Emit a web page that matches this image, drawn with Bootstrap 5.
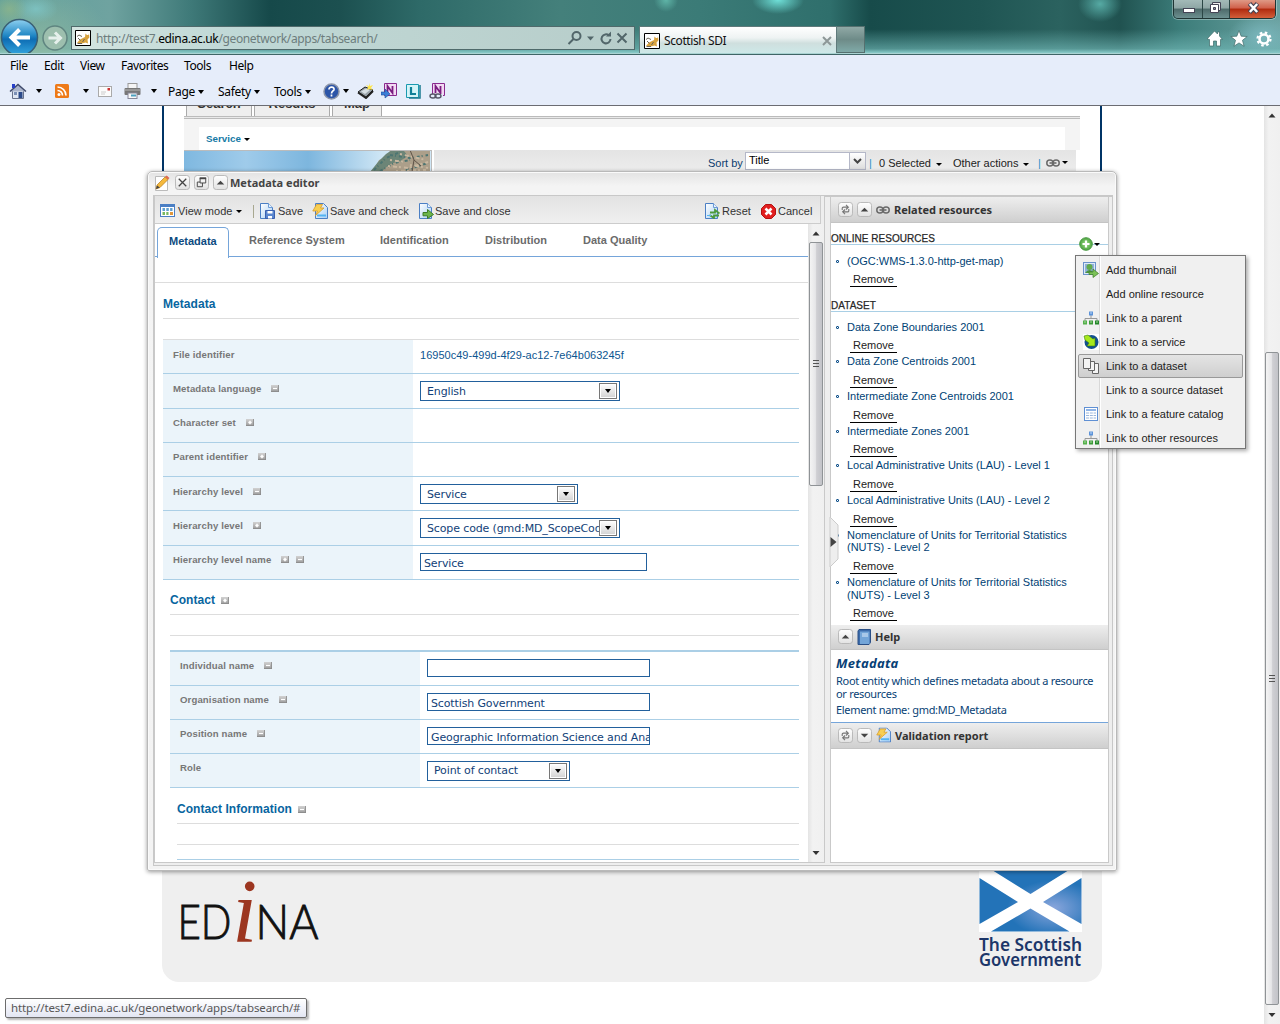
<!DOCTYPE html>
<html lang="en">
<head>
<meta charset="utf-8">
<title>Scottish SDI</title>
<link href="https://cdn.jsdelivr.net/npm/bootstrap@5.3.0/dist/css/bootstrap.min.css" rel="stylesheet">
<style>
body{width:1280px;height:1024px;overflow:hidden;font:11px/13px "Liberation Sans",Arial,sans-serif;color:#222;background:#fff}
svg{display:block;flex:none}
.seg{font-family:"Noto Sans","Open Sans",sans-serif}
.tah{font-family:"Noto Sans",sans-serif}
.nw{white-space:nowrap}
.gridrow{display:grid;align-items:center;white-space:nowrap}
/* browser chrome */
.glass{height:54px;overflow:hidden;border-bottom:1px solid #a9d3d2;
 background:
 radial-gradient(ellipse 18px 16px at 9px 9px,#8db58acc,transparent),
 radial-gradient(ellipse 22px 14px at 36px 9px,#7fc6c7cc,transparent),
 radial-gradient(ellipse 70px 60px at 40px 45px,#8fb8a0dd,transparent),
 radial-gradient(ellipse 12px 12px at 666px 0,#5fb5a8,transparent),
 radial-gradient(ellipse 26px 14px at 778px 0,#6fe0d8,transparent),
 radial-gradient(ellipse 22px 18px at 1100px 4px,#56aaa4,transparent),
 radial-gradient(ellipse 34px 22px at 1262px 36px,#7ab6bc,transparent),
 linear-gradient(180deg,transparent 55%,#6fb5b3aa 92%,#8accca),
 linear-gradient(90deg,#5d9f9c 0,#6fa3a0 110px,#3f7a79 190px,#16494a 270px,#1c5050 340px,#2e6a68 420px,#44807b 560px,#3b7b77 700px,#2f6f6c 830px,#174b4a 870px,#1f5553 980px,#2b625f 1060px,#205250 1120px,#3c7d7a 1180px,#6aa09f 1280px)}
.backclip{width:40px;height:36px;margin-top:18px;overflow:hidden}
.addr{width:564px;height:24px;margin:26px 0 0 3px;border:1px solid #4f6a6b;background:linear-gradient(90deg,#d3e4e0,#bfd8d6 30%,#bdd4d1 60%,#b7cdca);font-size:12px;grid-template-columns:3px 21px 471px 66px}
.addr .url{color:#6d7d7d;letter-spacing:-.36px}
.addr b{font-weight:400;color:#000}
.tabon{width:198px;height:28px;margin:26px 0 0 4px;border:1px solid #5f7a7b;border-bottom:0;background:linear-gradient(#fff,#eef3f3 40%,#cfdfde 60%,#cde9e9);font-size:12px;grid-template-columns:4px 20px 158px 12px;color:#111;letter-spacing:-.4px}
.tabnew{width:28px;height:27px;margin-top:26px;border:1px solid #55706f;border-left:0;background:linear-gradient(#90a9a6,#6e8b88 50%,#80aaa8)}
.winctl{height:19px;border:1px solid #1f3534;border-top:0;border-radius:0 0 5px 5px;overflow:hidden;box-shadow:0 0 0 1px #ffffff55;width:103px;margin-left:4px}
.winctl div{height:18px;background:linear-gradient(#a3bab8,#8ea6a5 45%,#4d6a6a 50%,#6d9090);border-right:1px solid #2b4746}
.winctl .red{background:linear-gradient(#df9a86,#d0604a 45%,#b02a0e 50%,#d35f3a);border:0}
.wmin{width:29px}.wmax{width:27px}
.wicons{margin:10px 0 0 35px}
.menubar,.cmdbar{background:#e6edfa;color:#000;font-size:12px}
.menubar{height:26px;border-top:1px solid #3f6566;grid-template-columns:34px 36px 41px 63px 45px 60px;padding:0 0 4px 10px;letter-spacing:-.42px}
.cmdbar{height:26px;border-bottom:1px solid #6b6c72;padding:0 0 3px 9px;letter-spacing:-.3px;grid-template-columns:27px 19px 28px 15px 26px 27px 17px 50px 56px 49px 30px 24px 24px 24px 24px}
.cmdbar svg{display:inline-block;vertical-align:middle}
.crt{display:inline-block;width:0;height:0;border:3px solid transparent;border-top:3px solid #000;border-bottom:0;vertical-align:middle;justify-self:start}
.crt.g{border-width:3.5px;border-bottom:0;border-top-width:4px}
/* page */
.viewport-area{height:918px;position:relative}
.pagecol{width:940px;margin-left:162px}
.pagetop{height:764px;border:solid #003466;border-width:0 2px;padding:0 20px}
.sheettabs{height:10px;margin-left:2px;gap:2px}
.sheettabs div{background:#eee;border:1px solid #aaa;border-width:0 1px;overflow:hidden;font-size:13px;font-weight:700;text-align:center;line-height:13px;color:#333}
.sheettabs span{display:block;margin-top:-9px}
.strip{height:3px;background:#e9e9e9;border:solid #bbb;border-width:1px 0}
.svc{background:#f4f4f4;height:31px;padding:8px 15px 0}
.svc>div{background:#fff;height:23px;padding:6px 7px;color:#1579a5;font-weight:700;font-size:9.8px;line-height:12px}
.sorter{width:642px;height:40px;margin-left:2px;background:linear-gradient(#e4e4e4,#ececec 20px);color:#222;grid-template-columns:37px 121px 3px 10px 74px 85px 8px 40px;padding-left:274px;align-items:start;padding-top:2px}
.sorter>*{line-height:23px}
.sorter .bar{color:#2f8fc8}
.sorter .crt{margin-left:2px}
.sortlab{color:#0c3d6e}
.linkcell{height:21px}
.titlebox{width:121px;height:18px;border:1px solid #b5b8c8;background:#fff;line-height:15px!important;padding-left:3px;color:#000}
.titlebox i{width:16px;background:linear-gradient(#fff,#ddd);border-left:1px solid #b5b8c8}
.foot{height:112px;background:#efefef;border-radius:0 0 17px 17px;padding:0 20px 0 16px}
.vsb{width:16px;background:linear-gradient(90deg,#e4e4e4,#f2f2f2 30%,#f0f0f0)}
.thumb{width:14px;border:1px solid #8f9396;border-radius:2px;background:linear-gradient(90deg,#f4f4f4,#e6e6e8 45%,#cfcfd3 55%,#c2c3c8)}
.tall{height:653px}.short{height:244px}
.pagesb{position:absolute;right:0;top:0;height:918px}
.status{position:absolute;left:5px;top:892px;width:302px;height:20px;border:1px solid #6c6c6c;border-radius:2px;background:linear-gradient(#fff,#e3e6f3);box-shadow:2px 2px 2px #8889;font-size:11.5px;line-height:18px;color:#575757;padding-left:5px;letter-spacing:-.1px}
/* window */
.editor{position:absolute;left:147px;top:65px;width:970px;height:700px;border:1px solid #b9b9b9;border-radius:5px 5px 2px 2px;background:linear-gradient(#e3e3e3,#f4f4f4 14px,#f3f3f3);box-shadow:0 1px 4px #0006, inset 0 0 0 1px #fafafa;padding:0 4px 0 5px}
.edhead{height:23px;padding:0 0 2px 1px;grid-template-columns:21px 19px 19px 17px auto;font-weight:700;color:#444;font-size:11px}
.edbody{height:671px;width:960px;border:1px solid #c8c8c8;background:#eee;border-top-width:2px}
.pleft{width:671px;height:667px;border:1px solid #c9c9c9;border-top:0;background:#fff;margin-top:-1px}
.etool{width:666px;height:28px;border:solid #ccc;border-width:0 1px 1px 0;background:linear-gradient(#e2e2e2,#f0f0f0);color:#333;letter-spacing:.03px;padding:3px 0 0 5px;grid-template-columns:18px 59px 22px 19px 34px 18px 88px 17px 269px 18px 39px 17px 40px}
.etop{background:#eee}
.pane{height:638px;overflow:hidden}
.pform{width:653px;height:638px;overflow:hidden}
.etabs{height:33px;border-bottom:1px solid #75a5da;padding-left:2px;font-weight:700;color:#6b6b6b;letter-spacing:.02px;padding-bottom:1px;grid-template-columns:92px 131px 105px 98px 90px}
.etabs .on{width:72px;height:31px;margin-top:2px;border:1px solid #75a5da;border-bottom:0;border-radius:5px 5px 0 0;background:#fff;color:#0c4a80;position:relative;top:1px;padding:7px 0 0 11px;letter-spacing:0}
.secline{border-bottom:1px solid #ddd;margin-right:9px}
.h-gap{height:21px}
.sech{font-size:12px;font-weight:700;color:#0765a0;letter-spacing:.05px;height:36px;padding-top:15px}
.sech.alt{height:35px;padding-top:14px}
.sech svg{margin:3px 0 0 6px}
.frow{border-bottom:1px solid #abcfe6;margin-right:9px}
.lvl1{padding-left:8px}.lvl2{padding-left:15px}.lvl3{padding-left:22px}
.topline{height:16px;border-bottom-width:2px}.endline{height:15px}
.r1{height:34.28px}.r2{height:34px}
.flab{width:250px;background:#ebf4fa;color:#777;font-weight:700;font-size:9.6px;line-height:12px;padding:8.500px 0 0 10px;letter-spacing:.12px}
.flab svg{margin:2px 0 0 10px}
.flab svg+svg{margin-left:7px}
.fval{padding:7px 0 0 7px;color:#0c5590}
.plainval{padding-top:2px;letter-spacing:.02px}
.inp{border:1px solid #22609c;height:18px;font:11px/17px "DejaVu Sans",Verdana,sans-serif;letter-spacing:-.13px;color:#123f78;padding:1px 0 0 3px;overflow:hidden;white-space:nowrap;background:#fff}
.sel{height:20px;padding:0 2px 0 6px}
.sel>span{overflow:hidden;height:17px;line-height:18px;min-width:0}
.sel i{width:18px;height:16px;flex:none;border:1px solid #777;background:linear-gradient(#fff,#d2d2d2);outline:1px solid #fff;outline-offset:-2px}
.pright{width:279px;height:667px;margin:-1px 0 0 5px;border:1px solid #c9c9c9;background:#fff}
.phead{height:26px;background:linear-gradient(#eee,#cfcfcf);border-bottom:1px solid #c4c4c4;font-weight:700;font-size:11px;color:#333;padding-left:7px;letter-spacing:0}
.phead.low{margin-top:3.400px;height:25px}
.reshead{font-size:10px;color:#222;letter-spacing:.04px;border-bottom:1px solid #a9cfe5;line-height:12px;height:13px;-webkit-text-stroke:.25px #333}
.rh1{margin-top:9px;line-height:13px}.rh2{margin-top:12px;line-height:13px}
.rl1{padding-top:10px}.rl2{padding-top:9px}
.resitem{color:#003f74;line-height:12.67px;padding-left:16px;position:relative}
.resitem::before{content:"";position:absolute;left:5px;top:5px;width:3px;height:3px;border:1px solid #0d4f8a;border-radius:1px}
.rm{display:block;width:47px;height:15px;margin:5px 0 2px 3px;border-bottom:1px solid #000;color:#222;line-height:14px;padding-left:3px;font-size:11px}
.rl1 .rm{margin:4px 0 3px 3px}
.helpbox{height:73px;border-bottom:1px solid #75a5da;color:#083f75;padding:6px 5px;font-size:11px;line-height:13px;letter-spacing:-.31px;white-space:nowrap}
.helptitle{font-size:13px;line-height:14px;margin-bottom:4px;letter-spacing:.3px}
.helpel{margin-top:3px}
.plus{position:absolute;left:1078px;top:131px}
.handle{position:absolute;left:829px;top:411px}
.ctx{position:absolute;left:1075px;top:149px;width:171px;height:194px;border:1px solid #777;background:linear-gradient(90deg,#f0f0f0 23px,#d8d8d8 23px,#d8d8d8 24px,#fff 24px,#fff 25px,#f0f0f0 25px);box-shadow:2px 2px 4px #0005;padding:2px;color:#222}
.ctx>div{height:24px;grid-template-columns:23px auto;padding-left:4px;border:1px solid transparent;border-radius:2px}
.ctx>.hot{background:linear-gradient(#e4e4e4,#cfcfcf);border-color:#999}
.ctx span{grid-column:2}
</style>
</head>
<body>
<svg width="0" height="0" class="position-absolute">
<defs>
<linearGradient id="bb" x2="0" y2="1"><stop stop-color="#8ed0f0"/><stop offset=".45" stop-color="#1f86c4"/><stop offset=".55" stop-color="#0e6db4"/><stop offset="1" stop-color="#35a8e0"/></linearGradient>
<linearGradient id="pg" x2="1" y2="1"><stop stop-color="#fff"/><stop offset="1" stop-color="#a9d0f5"/></linearGradient>
<linearGradient id="bt" x2="0" y2="1"><stop stop-color="#fff"/><stop offset="1" stop-color="#e2e2e2"/></linearGradient>
<radialGradient id="gr"><stop stop-color="#9ddc85"/><stop offset="1" stop-color="#4fa543"/></radialGradient>
<linearGradient id="pmg" x2="0" y2="1"><stop stop-color="#d2d2d2"/><stop offset="1" stop-color="#9a9a9a"/></linearGradient>
<symbol id="cat" viewBox="0 0 16 16"><path d="M.5.5h15v15H.5z" fill="#fff" stroke="#000"/><path d="M2 13l3-3.500 3-1.500 2-1 .5-3.500L12 5h1.500L14 3.500l.4 4-1.900 2 .5 4-2.500-1-3.500 1z" fill="#d9a33f"/><path d="M2 6.500l2-1.500 3 1.500M3 8l2.500 2.500M2.500 13.500H7M9.500 9l-2 3" stroke="#6b6658" fill="none"/></symbol>
<symbol id="page" viewBox="0 0 16 16"><path d="M1.500.500h8l4 4v11h-12z" fill="url(#pg)" stroke="#4b7fc4"/><path d="M9.500.500v4h4" fill="#e8f3ff" stroke="#6d9bd6"/></symbol>
<symbol id="check" viewBox="0 0 16 16"><path d="M3.500.500h8l4 4v11h-12z" fill="url(#pg)" stroke="#4b7fc4"/><path d="M5 12.500h9" stroke="#54b4f2" stroke-width="2"/><path d="M4.500 1.500h6L8.500 5H12L3.500 12.500 5.500 8H.8z" fill="#f8cf52" stroke="#d99b27" stroke-width=".8"/></symbol>
<symbol id="up" viewBox="0 0 16 16"><rect x=".5" y=".5" width="15" height="15" rx="3" fill="url(#bt)" stroke="#b5b5b5"/><path d="M4 10l4-4 4 4z" fill="#444"/></symbol>
<symbol id="down" viewBox="0 0 16 16"><rect x=".5" y=".5" width="15" height="15" rx="3" fill="url(#bt)" stroke="#b5b5b5"/><path d="M4 6l4 4 4-4z" fill="#444"/></symbol>
<symbol id="refr" viewBox="0 0 16 16"><rect x=".5" y=".5" width="15" height="15" rx="3" fill="url(#bt)" stroke="#b5b5b5"/><path d="M4.500 8.500V6.500Q4.500 5.500 6 5.500H10.500M8.500 3l2.500 2.500L8.500 8M11.500 7.500v2q0 1-1.500 1H5.500M7.500 8L5 10.500 7.500 13" fill="none" stroke="#777" stroke-width="1.200"/></symbol>
<symbol id="chain" viewBox="0 0 14 8"><rect x=".8" y="1" width="6.200" height="6" rx="3" fill="none" stroke="#6a6a6a" stroke-width="1.500"/><rect x="7" y="1" width="6.200" height="6" rx="3" fill="none" stroke="#6a6a6a" stroke-width="1.500"/><path d="M3.500 4h7" stroke="#6a6a6a" stroke-width="1.600"/></symbol>
<symbol id="tree" viewBox="0 0 16 14"><path d="M8 4v3M2 10V7.500h12V10" fill="none" stroke="#999"/><rect x="6" y=".5" width="4" height="4" fill="#5d93d8"/><rect x="7" y="1.500" width="2" height="1" fill="#b9d5f7"/><rect y="9.500" width="4" height="4" fill="#55b04b"/><rect x="6" y="9.500" width="4" height="4" fill="#3d9a3a"/><rect x="12" y="9.500" width="4" height="4" fill="#23862a"/><path d="M1 11h2M7 11h2M13 11h2" stroke="#a6dc9c"/></symbol>
<symbol id="minus" viewBox="0 0 8 7"><rect width="8" height="7" fill="url(#pmg)"/><path d="M2 3.500h4" stroke="#fff" stroke-width="1.200"/><path d="M0 6.500h8M7.500 0v7" stroke="#8a8a8a" stroke-width=".8"/></symbol>
<symbol id="add" viewBox="0 0 8 7"><rect width="8" height="7" fill="url(#pmg)"/><path d="M2.300 3.500h3.400M4 1.800v3.400" stroke="#fff" stroke-width="1.600"/><path d="M0 6.500h8M7.500 0v7" stroke="#8a8a8a" stroke-width=".8"/></symbol>
<symbol id="note" viewBox="0 0 16 16"><path d="M3.500.500h12v12h-12z" fill="#f3d9f3" stroke="#8a2a8e"/><path d="M6.500 10V3l5 7V3" fill="none" stroke="#7a1c80" stroke-width="1.800"/></symbol>
</defs>
</svg>

<!-- title bar with navigation -->
<header class="seg">
<div class="glass d-flex align-items-start">
 <div class="backclip"><svg width="40" height="40"><circle cx="19.500" cy="19.500" r="18" fill="url(#bb)" stroke="#3a5f74" stroke-width="1.500"/><path d="M30 19.500H13M19.500 11.500l-8 8 8 8" fill="none" stroke="#fff" stroke-width="4"/></svg></div>
 <svg width="28" height="28" class="mt-4"><circle cx="15" cy="14" r="12" fill="#9dbfae" stroke="#5f8580" stroke-width="1.500"/><path d="M8.500 14h11M15 8.500l5.500 5.500-5.500 5.500" fill="none" stroke="#e6f0ec" stroke-width="3"/></svg>
 <div class="addr gridrow"><i></i><svg width="16" height="16"><use href="#cat"/></svg><span class="url">http://test7.<b>edina.ac.uk</b>/geonetwork/apps/tabsearch/</span>
  <svg width="64" height="16"><g fill="none" stroke="#52666a" stroke-width="2"><circle cx="9.500" cy="6" r="4"/><path d="M6.500 9l-5 5M50.500 3.500l9 9M59.500 3.500l-9 9"/><path d="M42 5.500A4.500 4.500 0 1043.500 9"/></g><path d="M39 6.500h5V1.500z" fill="#52666a"/><path d="M20 6.500h7l-3.500 4z" fill="#52666a"/></svg></div>
 <div class="tabon gridrow"><i></i><svg width="16" height="16"><use href="#cat"/></svg><span>Scottish SDI</span><svg width="10" height="10"><path d="M1 1l8 8M9 1L1 9" stroke="#8d9797" stroke-width="2"/></svg></div>
 <div class="tabnew"></div>
 <div class="ms-auto pe-1">
  <div class="winctl d-flex"><div class="wmin"><svg width="29" height="18"><rect x="9.500" y="8.500" width="11" height="4" fill="#fff" stroke="#445"/></svg></div><div class="wmax"><svg width="27" height="18"><path d="M9.500 2.500h8v8h-8z" fill="#eee" stroke="#445"/><path d="M7.500 4.500h8v8h-8z" fill="#fff" stroke="#445"/><path d="M10.500 7.500h2v2h-2z" fill="#889" stroke="#445"/></svg></div><div class="red flex-fill"><svg width="46" height="18"><path d="M19.500 3.500l8 9M27.500 3.500l-8 9" stroke="#445" stroke-width="4.500"/><path d="M19.800 4l7.400 8M27.200 4l-7.400 8" stroke="#fff" stroke-width="2.500"/></svg></div></div>
  <svg class="wicons" width="72" height="20" viewBox="-3 0 72 20"><g fill="#fff" stroke="#3d6a68" stroke-width=".7"><path d="M0 10l7.500-8 3 3V3h2v4l3 3.500h-2V17H9.500v-5h-3v5H2.500v-6.500z"/><path d="M32 1.500l2.200 5.700 6 .3-4.700 3.800 1.600 6-5.100-3.400-5.100 3.400 1.600-6-4.700-3.800 6-.3z"/></g><circle cx="57" cy="10" r="4.500" fill="none" stroke="#fff" stroke-width="2.600"/><circle cx="57" cy="10" r="6.500" fill="none" stroke="#fff" stroke-width="2.200" stroke-dasharray="2.550 2.550"/></svg>
 </div>
</div>
<nav class="menubar gridrow"><span>File</span><span>Edit</span><span>View</span><span>Favorites</span><span>Tools</span><span>Help</span></nav>
<div class="cmdbar gridrow">
 <svg width="18" height="18"><path d="M3.500 9v7.500h11V9" fill="#dfe6f2" stroke="#67718a"/><path d="M1 9.500l8-7 8 7" fill="#aab4cb" stroke="#3f4a6b" stroke-width="1.500"/><path d="M3 2h3v4H3z" fill="#2740c8"/><path d="M9.500 10h4v6h-4z" fill="#2b4a8a"/><path d="M5 10h3v3H5z" fill="#7b8fb5"/></svg><i class="crt g"></i>
 <svg width="14" height="14"><rect width="14" height="14" rx="1.500" fill="#ee7a18"/><circle cx="4" cy="10.500" r="1.500" fill="#fff"/><path d="M2.500 6.500a5 5 0 015 5M2.500 3a8.500 8.500 0 018.500 8.500" stroke="#fff" stroke-width="1.700" fill="none"/></svg><i class="crt g"></i>
 <svg width="14" height="11"><rect x=".5" y=".5" width="13" height="10" fill="#fbfbfb" stroke="#aaa"/><rect x="9.500" y="2" width="2.500" height="2.500" fill="#c33"/><path d="M3 6h5M3 8h4" stroke="#ccc"/></svg>
 <svg width="17" height="16"><rect x="4" y=".5" width="9" height="5" fill="#f5f5f5" stroke="#999"/><rect x=".5" y="5" width="16" height="7" rx="1" fill="#777"/><path d="M1 7h15" stroke="#bbb"/><rect x="4" y="10" width="9" height="5.500" fill="#f8f8f8" stroke="#889"/><path d="M7 12.500h5" stroke="#4da0c0" stroke-width="2"/></svg><i class="crt g"></i>
 <span>Page <i class="crt g"></i></span><span>Safety <i class="crt g"></i></span><span>Tools <i class="crt g"></i></span>
 <span><svg width="17" height="17"><circle cx="8.500" cy="8.500" r="7.500" fill="#2c55a8" stroke="#8c95a8" stroke-width="1.500"/><path d="M6 6.500c0-3.500 5.500-3 5 0-.3 1.500-2.500 1.500-2.500 4M8.500 11.500v2" fill="none" stroke="#fff" stroke-width="1.700"/></svg> <i class="crt g"></i></span>
 <svg width="17" height="16" class="ms-1"><path d="M1 9l7-5 8 3-7 7z" fill="#98a1a8" stroke="#1c1c1c"/><path d="M1 9.500l8 5.500 7-7" fill="none" stroke="#222" stroke-width="2"/><path d="M4 8.500l5-3 4 1.500-5 4z" fill="#d6dee2"/><path d="M12 0l1 3 3-1-2 3 2 2-4-1-2 1 1-3-2-2 3 1z" fill="#ffe64a"/></svg>
 <svg width="16" height="16" class="ms-1"><use href="#note"/><path d="M0 9h4V6l5 5-5 4v-3H0z" fill="#3c7ed6" stroke="#1d4d9a" stroke-width=".6"/></svg>
 <svg width="16" height="16" class="ms-1"><path d="M1.500 1.500h12v13h-12z" fill="#d4f4f8" stroke="#1a9ab0"/><path d="M15 2v13H4" fill="none" stroke="#1a7a90" stroke-width="1.500"/><path d="M6 4v7h5" fill="none" stroke="#108098" stroke-width="2.200"/></svg>
 <svg width="16" height="16" class="ms-1"><use href="#note"/><path d="M0 11h14v5H0z" fill="#e6edfa"/><ellipse cx="4" cy="13" rx="3" ry="2" fill="none" stroke="#556" stroke-width="1.400"/><ellipse cx="9" cy="13" rx="3" ry="2" fill="none" stroke="#556" stroke-width="1.400"/></svg>
</div>
</header>

<main class="viewport-area">
<div class="pagecol">
 <div class="pagetop">
  <div class="sheettabs d-flex"><div style="width:66px"><span>Search</span></div><div style="width:76px"><span>Results</span></div><div style="width:50px"><span>Map</span></div></div>
  <div class="strip"></div>
  <div class="svc"><div>Service <i class="crt"></i></div></div>
  <div class="d-flex">
   <svg width="248" height="40" viewBox="0 0 248 40"><defs><linearGradient id="sky"><stop stop-color="#7fb8e0"/><stop offset=".25" stop-color="#9fcbea"/><stop offset=".5" stop-color="#7db6de"/><stop offset=".8" stop-color="#cfe6f5"/></linearGradient></defs><path d="M0 0h248v40H0z" fill="url(#sky)"/><path d="M184 24l8-8 3-6 7-3 4-6h40v39h-62z" fill="#ac9f8a"/><path d="M186 22l8-10 8-8 6-4 12 1 4 5-8 5-10 3-8 7z" fill="#6c8577"/><g fill="none" stroke="#4c7572" stroke-width="2" stroke-dasharray="3 2 1 3"><path d="M190 20l12-12 14-6M196 21l14-8 16-3M206 5l20 3 18-3M222 20l22-7"/></g><g fill="none" stroke="#c9b8a0" stroke-width="2" stroke-dasharray="2 3 4 2"><path d="M204 16l20 2 20-6M212 21l30-1M216 4l26 6M226 15l18 3M206 10l14 2"/></g><path d="M226 0l4 10-2 12M230 10l7 6" fill="none" stroke="#5f5348"/><path d="M0 .500h248M247.500 0v40" stroke="#bbb"/></svg>
   <div class="sorter gridrow"><span class="sortlab">Sort by</span><div class="titlebox d-flex justify-content-between">Title<i><svg width="15" height="16"><path d="M4 6l3.500 3.500L11 6" fill="none" stroke="#444" stroke-width="2"/></svg></i></div><i></i><span class="bar">|</span><span>0 Selected <i class="crt"></i></span><span>Other actions <i class="crt"></i></span><span class="bar">|</span><span class="linkcell d-flex align-items-center"><svg width="14" height="8"><use href="#chain"/></svg><i class="crt"></i></span></div>
  </div>
 </div>
 <footer class="foot d-flex justify-content-between">
  <svg width="145" height="100" viewBox="178 870 145 100"><g font-family="Lato" font-weight="300" font-size="47" fill="#111" stroke="#111" stroke-width=".9"><text x="177.500" y="939" textLength="54" lengthAdjust="spacingAndGlyphs">ED</text><text x="255.500" y="939" textLength="63" lengthAdjust="spacingAndGlyphs">NA</text></g><text x="232" y="942" font-family="Liberation Serif" font-style="italic" font-size="91" fill="#9c3620">i</text></svg>
  <svg width="103" height="100" viewBox="979 870 103 100"><defs><radialGradient id="fl" cx=".72" cy=".62" r=".45"><stop stop-color="#8aa6dc"/><stop offset="1" stop-color="#2373b8"/></radialGradient></defs><path d="M979 870h103v62H979z" fill="#fff"/><path d="M992 870h77l-38.500 24zM979.500 878l38.500 24-38.500 22zM1081.500 878l-38.500 24 38.500 22zM991 931.500l39.500-23 39 23z" fill="url(#fl)"/><g font-family="Noto Sans" font-weight="600" font-size="17" fill="#1c3669"><text x="979" y="951" textLength="103" lengthAdjust="spacingAndGlyphs">The Scottish</text><text x="979" y="966" textLength="102" lengthAdjust="spacingAndGlyphs">Government</text></g></svg>
 </footer>
</div>
<div class="vsb pagesb d-flex flex-column align-items-center"><svg width="14" height="246"><path d="M3.500 11.500l3.500-4 3.500 4z" fill="#333"/></svg><div class="thumb tall d-flex align-items-center"><svg width="12" height="8"><path d="M3 .500h6M3 3.500h6M3 6.500h6" stroke="#555"/></svg></div><svg width="14" height="18"><path d="M3.500 8l3.500 4 3.500-4z" fill="#333"/></svg></div>

<section class="editor">
 <div class="edhead gridrow tah">
  <svg width="16" height="16"><path d="M1.500 1.500h12v14h-12z" fill="#fff" stroke="#bbb"/><path d="M2 14l1-4 8-8 3 2.500-8 8z" fill="#f5b93c" stroke="#b57a1d" stroke-width=".7"/><path d="M11 2l1.500-1.500 3 2.500L14 4.500z" fill="#e06a50"/><path d="M2 14l1-3.500 2.800 2z" fill="#444"/></svg>
  <svg width="15" height="15" viewBox="0 0 16 16"><rect x=".5" y=".5" width="15" height="15" rx="3" fill="url(#bt)" stroke="#b5b5b5"/><path d="M4 4l8 8M12 4l-8 8" stroke="#444" stroke-width="1.400"/></svg>
  <svg width="15" height="15" viewBox="0 0 16 16"><rect x=".5" y=".5" width="15" height="15" rx="3" fill="url(#bt)" stroke="#b5b5b5"/><path d="M6.500 3.500h6v5h-6zM9 8.500v4H3.500v-5h3" fill="none" stroke="#444"/><path d="M6 3.500h7" stroke="#444" stroke-width="2"/></svg>
  <svg width="15" height="15"><use href="#up"/></svg><span>Metadata editor</span>
 </div>
 <div class="edbody d-flex">
  <div class="pleft">
   <div class="etop"><div class="etool gridrow">
    <svg width="15" height="14"><rect x=".5" y=".5" width="14" height="12" fill="#fff" stroke="#4b7fc4"/><path d="M1 2h13" stroke="#4b7fc4" stroke-width="2"/><path d="M2.500 5.500h10" stroke="#5f9fd0" stroke-width="3" stroke-dasharray="2.500 1.300"/><path d="M2.500 9.500h6" stroke="#77b860" stroke-width="3" stroke-dasharray="2.500 1.300"/><path d="M10 9.500h3" stroke="#e0973c" stroke-width="3"/></svg>
    <span>View mode <i class="crt"></i></span><svg width="1" height="13" class="ms-3"><path d="M0 0v13" stroke="#a8a890" stroke-width="2"/></svg>
    <svg width="16" height="16"><use href="#page"/><path d="M6.500 7.500h9v8h-9z" fill="#5a86cf" stroke="#3a5fae"/><path d="M8.500 8h5v2.500h-5zM9 13h4v2.500H9z" fill="#fff"/></svg><span>Save</span>
    <svg width="16" height="16"><use href="#check"/></svg><span>Save and check</span>
    <svg width="16" height="16"><use href="#page"/><path d="M5 9.500h4.500V6.500l6 5-6 4V12.800H5z" fill="#6db54a" stroke="#3d7c28"/></svg><span>Save and close</span>
    <svg width="16" height="16"><use href="#page"/><path d="M6 9.500h5V7l4.500 3.500M15 12.500h-5V15L5.500 12" fill="none" stroke="#4c9a3a" stroke-width="1.800"/><path d="M3 12.500h4" stroke="#54b4f2"/></svg><span>Reset</span>
    <svg width="15" height="15"><path d="M4.500.500h6l4 4v6l-4 4h-6l-4-4v-6z" fill="#e11f1f" stroke="#b31212"/><path d="M4.500 4.500l6 6M10.500 4.500l-6 6" stroke="#fff" stroke-width="2.500"/></svg><span>Cancel</span>
   </div></div>
   <div class="pane d-flex">
    <div class="pform">
     <div class="etabs gridrow"><span class="on">Metadata</span><span>Reference System</span><span>Identification</span><span>Distribution</span><span>Data Quality</span></div>
     <div class="secline me-0" style="height:26px"></div>
     <div class="lvl1">
      <div class="secline sech">Metadata</div>
      <div class="secline h-gap"></div>
      <div id="rows1"></div>
     </div>
     <div class="lvl2">
      <div class="secline sech alt d-flex">Contact<svg width="8" height="7"><use href="#add"/></svg></div>
      <div class="secline h-gap"></div>
      <div class="frow topline"></div>
      <div id="rows2"></div>
     </div>
     <div class="lvl3">
      <div class="secline sech d-flex">Contact Information<svg width="8" height="7"><use href="#minus"/></svg></div>
      <div class="secline h-gap"></div>
      <div class="frow endline"></div>
     </div>
    </div>
    <div class="vsb d-flex flex-column align-items-center"><svg width="14" height="18"><path d="M3.500 11.500l3.500-4 3.500 4z" fill="#333"/></svg><div class="thumb short d-flex align-items-center"><svg width="12" height="8"><path d="M3 .500h6M3 3.500h6M3 6.500h6" stroke="#555"/></svg></div><svg width="14" height="18" class="mt-auto"><path d="M3.500 7l3.500 4 3.500-4z" fill="#333"/></svg></div>
   </div>
  </div>
  <div class="pright">
   <div class="phead tah d-flex align-items-center"><svg width="15" height="15"><use href="#refr"/></svg><svg width="15" height="15" class="ms-1"><use href="#up"/></svg><svg width="14" height="8" class="ms-1"><use href="#chain"/></svg><span class="ms-1">Related resources</span></div>
   <div class="reshead rh1">ONLINE RESOURCES</div>
   <div id="res1" class="rl1"></div>
   <div class="reshead rh2">DATASET</div>
   <div id="res2" class="rl2"></div>
   <div class="phead low tah d-flex align-items-center"><svg width="15" height="15"><use href="#up"/></svg><svg width="14" height="16" class="ms-1"><path d="M1 2l1-1.500h11.500v13L12 15.500H1z" fill="#3c6cab" stroke="#2a4f86"/><path d="M3 2.500h9.500V15H3z" fill="#73a5d8"/><path d="M5 5h6M5 7h6" stroke="#dceafa"/></svg><span class="ms-1">Help</span></div>
   <div class="helpbox tah"><div class="helptitle fw-bold fst-italic">Metadata</div>Root entity which defines metadata about a resource<br>or resources<div class="helpel">Element name: gmd:MD_Metadata</div></div>
   <div class="phead tah d-flex align-items-center"><svg width="15" height="15"><use href="#refr"/></svg><svg width="15" height="15" class="ms-1"><use href="#down"/></svg><svg width="15" height="16" viewBox="0 0 16 16" class="ms-1"><use href="#check"/></svg><span class="ms-1">Validation report</span></div>
  </div>
 </div>
</section>

<div class="plus d-flex align-items-center"><svg width="16" height="14"><circle cx="8" cy="7" r="6.300" fill="url(#gr)" stroke="#4b9a45"/><path d="M8 3.500v7M4.500 7h7" stroke="#fff" stroke-width="2.200"/></svg><i class="crt"></i></div>
<svg class="handle" width="10" height="50"><path d="M1 0l8 8v34l-8 8z" fill="#eee" stroke="#ccc"/><path d="M1.500 20l6 5-6 5z" fill="#444"/></svg>

<div class="ctx">
 <div class="gridrow"><svg width="16" height="16"><rect x=".5" y=".5" width="12" height="12" fill="#dfeaf8" stroke="#6a93cc"/><path d="M2 2h9v9H2z" fill="#8fb0d8"/><circle cx="6.500" cy="5" r="3" fill="#62ab4c"/><path d="M2 11q4.500-6 9 0z" fill="#4c9440"/><path d="M6 10h4V7l5.500 4.500L10 15.500v-3H6z" fill="#7cc257" stroke="#3d7c28" stroke-width=".7"/></svg><span>Add thumbnail</span></div>
 <div class="gridrow"><span>Add online resource</span></div>
 <div class="gridrow"><svg width="16" height="14"><use href="#tree"/></svg><span>Link to a parent</span></div>
 <div class="gridrow"><svg width="16" height="16"><path d="M0 0h16v16H0z" fill="#fff"/><circle cx="8.500" cy="8" r="7" fill="#12508f"/><path d="M1 2l4-1 5 4 2-1v8H4l2-3-4-3z" fill="#a6e81c" stroke="#3c7a10" stroke-width=".6"/></svg><span>Link to a service</span></div>
 <div class="gridrow hot"><svg width="16" height="16"><g fill="#f4f4f4" stroke="#666"><path d="M9.500 5.500h6v10h-6z"/><path d="M5.500 3.500h6v9h-6z"/><path d="M.5.500h7v10h-7z"/></g></svg><span>Link to a dataset</span></div>
 <div class="gridrow"><span>Link to a source dataset</span></div>
 <div class="gridrow"><svg width="15" height="14"><rect x="1.500" y=".5" width="13" height="13" fill="#fff" stroke="#5f90d4"/><path d="M3 3h10" stroke="#8fb4e6" stroke-width="2"/><path d="M3 6h10M3 8.500h10M3 11h10" stroke="#9ab6dc" stroke-dasharray="3 .8"/></svg><span>Link to a feature catalog</span></div>
 <div class="gridrow"><svg width="16" height="14"><use href="#tree"/></svg><span>Link to other resources</span></div>
</div>
<div class="status seg nw">http://test7.edina.ac.uk/geonetwork/apps/tabsearch/#</div>
</main>
<script src="https://cdn.jsdelivr.net/npm/bootstrap@5.3.0/dist/js/bootstrap.bundle.min.js"></script>
<script>
const icon = n => `<svg width="8" height="7"><use href="#${n}"/></svg>`;
const field = f => !f ? '' : f.kind === 'text' ? `<div class="plainval nw">${f.v}</div>`
  : f.kind === 'sel' ? `<div class="inp sel d-flex align-items-center" style="width:${f.w}px"><span class="flex-fill">${f.v}</span><i class="d-flex align-items-center justify-content-center"><b class="crt g"></b></i></div>`
  : `<div class="inp" style="width:${f.w}px">${f.v}</div>`;
const rows = (id, cls, list) => document.getElementById(id).innerHTML = list.map(([l, ic, f]) =>
  `<div class="frow d-flex ${cls}"><div class="flab d-flex nw">${l}${ic.map(icon).join('')}</div><div class="fval">${field(f)}</div></div>`).join('');
rows('rows1', 'r1', [
 ['File identifier', [], {kind:'text', v:'16950c49-499d-4f29-ac12-7e64b063245f'}],
 ['Metadata language', ['minus'], {kind:'sel', w:200, v:'English'}],
 ['Character set', ['add']],
 ['Parent identifier', ['add']],
 ['Hierarchy level', ['minus'], {kind:'sel', w:158, v:'Service'}],
 ['Hierarchy level', ['add'], {kind:'sel', w:200, v:'Scope code (gmd:MD_ScopeCode)'}],
 ['Hierarchy level name', ['add','minus'], {kind:'inp', w:227, v:'Service'}]]);
rows('rows2', 'r2', [
 ['Individual name', ['minus'], {kind:'inp', w:223, v:''}],
 ['Organisation name', ['minus'], {kind:'inp', w:223, v:'Scottish Government'}],
 ['Position name', ['minus'], {kind:'inp', w:223, v:'Geographic Information Science and Analysis'}],
 ['Role', [], {kind:'sel', w:143, v:'Point of contact'}]]);
const res = (id, list) => document.getElementById(id).innerHTML = list.map(t => `<div class="resitem">${t}<span class="rm">Remove</span></div>`).join('');
res('res1', ['(OGC:WMS-1.3.0-http-get-map)']);
res('res2', ['Data Zone Boundaries 2001','Data Zone Centroids 2001','Intermediate Zone Centroids 2001','Intermediate Zones 2001','Local Administrative Units (LAU) - Level 1','Local Administrative Units (LAU) - Level 2','Nomenclature of Units for Territorial Statistics<br>(NUTS) - Level 2','Nomenclature of Units for Territorial Statistics<br>(NUTS) - Level 3']);
</script>
</body>
</html>
